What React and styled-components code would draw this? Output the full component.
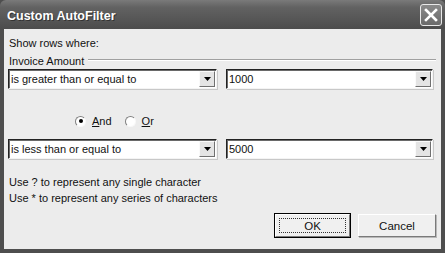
import React from 'react';
import styled, { createGlobalStyle } from 'styled-components';

const Global = createGlobalStyle`
  html, body { margin: 0; padding: 0; background: #3a3a3a; }
  * { box-sizing: border-box; }
`;

export default function App() {
  return (
    <Window>
      <Global />
      <TitleBar>
        <Title>Custom AutoFilter</Title>
        <CloseButton>
          <svg width="14" height="14" viewBox="0 0 14 14">
            <path d="M2 2 L12 12 M12 2 L2 12" stroke="#fff" strokeWidth="2.6" strokeLinecap="square" />
          </svg>
        </CloseButton>
      </TitleBar>
      <Body>
        <Label>Show rows where:</Label>
        <GroupLabel>
          <span>Invoice Amount</span>
          <Rule />
        </GroupLabel>
        <ComboRow $top={1}>
          <Combo $width={209}>
            <span>is greater than or equal to</span>
            <Arrow />
          </Combo>
          <Combo $width={207}>
            <span>1000</span>
            <Arrow />
          </Combo>
        </ComboRow>
        <RadioRow>
          <RadioOption>
            <Radio $checked />
            <span><u>A</u>nd</span>
          </RadioOption>
          <RadioOption>
            <Radio />
            <span><u>O</u>r</span>
          </RadioOption>
        </RadioRow>
        <ComboRow $top={7}>
          <Combo $width={209}>
            <span>is less than or equal to</span>
            <Arrow />
          </Combo>
          <Combo $width={207}>
            <span>5000</span>
            <Arrow />
          </Combo>
        </ComboRow>
        <Help>
          <Label>Use ? to represent any single character</Label>
          <Label>Use * to represent any series of characters</Label>
        </Help>
        <Buttons>
          <Button $default $width={75}><FocusText>OK</FocusText></Button>
          <Button $width={78}>Cancel</Button>
        </Buttons>
      </Body>
    </Window>
  );
}

function Arrow() {
  return (
    <ArrowBox>
      <svg width="7" height="4" viewBox="0 0 7 4">
        <path d="M0 0 H7 L3.5 4 Z" fill="#000" />
      </svg>
    </ArrowBox>
  );
}

const Window = styled.div`
  width: 445px;
  height: 253px;
  display: flex;
  flex-direction: column;
  background: #4e4e4e;
  font-family: 'Liberation Sans', Arial, sans-serif;
  font-size: 11px;
  color: #111;
`;

const TitleBar = styled.div`
  height: 29px;
  flex-shrink: 0;
  display: flex;
  align-items: center;
  justify-content: space-between;
  padding: 0 3px 0 7px;
  background: linear-gradient(#7a7a7a 0%, #626262 25%, #555 70%, #4c4c4c 100%);
  border-radius: 6px 6px 0 0;
`;

const Title = styled.div`
  font-family: 'Liberation Sans', Arial, sans-serif;
  font-weight: 700;
  font-size: 12.5px;
  color: #fff;
  text-shadow: 1px 1px 0 #333;
  padding-top: 2px;
`;

const CloseButton = styled.div`
  width: 22px;
  height: 22px;
  display: flex;
  align-items: center;
  justify-content: center;
  border: 1px solid #e8e8e8;
  border-radius: 3px;
  background: linear-gradient(#8a8a8a, #6a6a6a);
`;

const Body = styled.div`
  flex: 1;
  display: flex;
  flex-direction: column;
  margin: 0 4px 4px 4px;
  padding: 7px 5px 0 4px;
  background: #ececec;
`;

const Label = styled.div`
  height: 15px;
  line-height: 15px;
  padding-left: 1px;
  white-space: nowrap;
`;

const GroupLabel = styled.div`
  display: flex;
  align-items: center;
  gap: 4px;
  height: 15px;
  margin-top: 2px;
  padding-left: 1px;
`;

const Rule = styled.div`
  flex: 1;
  height: 2px;
  margin-top: -2px;
  border-top: 1px solid #a0a0a0;
  border-bottom: 1px solid #fff;
`;

const ComboRow = styled.div`
  display: flex;
  justify-content: space-between;
  margin-top: ${p => p.$top}px;
  padding-right: 3px;
`;

const Combo = styled.div`
  width: ${p => p.$width}px;
  height: 20px;
  display: flex;
  align-items: center;
  justify-content: space-between;
  background: #fff;
  border-top: 1px solid #222;
  border-left: 1px solid #222;
  border-right: 1px solid #f4f4f4;
  border-bottom: 1px solid #f4f4f4;
  box-shadow: inset 1px 1px 0 #6a6a6a, 1px 1px 0 #c8c8c8;
  padding: 0 1px 0 2px;

  span {
    white-space: nowrap;
  }
`;

const ArrowBox = styled.div`
  width: 16px;
  height: 16px;
  display: flex;
  align-items: center;
  justify-content: center;
  background: #e4e4e4;
  border-top: 1px solid #fafafa;
  border-left: 1px solid #fafafa;
  border-right: 1px solid #707070;
  border-bottom: 1px solid #707070;
`;

const RadioRow = styled.div`
  display: flex;
  gap: 13px;
  height: 22px;
  align-items: center;
  margin-top: 21px;
  padding-left: 67px;
`;

const RadioOption = styled.div`
  display: flex;
  align-items: center;
  gap: 6px;
  font-size: 11px;
`;

const Radio = styled.div`
  width: 11px;
  height: 11px;
  border-radius: 50%;
  background: #fff;
  border: 1px solid;
  border-color: #808080 #f8f8f8 #f8f8f8 #808080;
  display: flex;
  align-items: center;
  justify-content: center;

  &::after {
    content: '';
    width: 4px;
    height: 4px;
    border-radius: 50%;
    background: ${p => (p.$checked ? '#000' : 'transparent')};
  }
`;

const Help = styled.div`
  display: flex;
  flex-direction: column;
  gap: 1px;
  margin-top: 16px;
`;

const Buttons = styled.div`
  display: flex;
  justify-content: flex-end;
  gap: 8px;
  margin-top: 8px;
`;

const Button = styled.div`
  width: ${p => p.$width}px;
  height: 23px;
  display: flex;
  align-items: center;
  justify-content: center;
  font-size: 11.5px;
  background: #f0f0f0;
  border: 1px solid;
  border-color: #fff #7a7a7a #7a7a7a #fff;
  box-shadow: ${p => (p.$default ? '0 0 0 1px #000' : '1px 1px 0 #b8b8b8')};
`;

const FocusText = styled.span`
  display: flex;
  align-items: center;
  justify-content: center;
  width: calc(100% - 6px);
  height: calc(100% - 6px);
  border: 1px dotted #333;
`;
